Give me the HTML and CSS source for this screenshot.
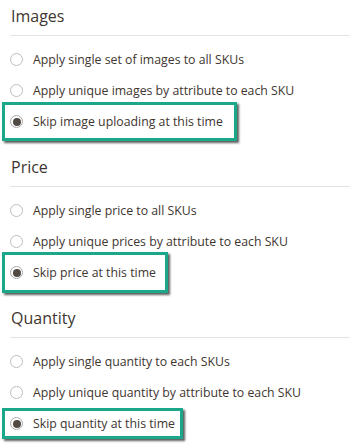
FILE: index.html
```html
<!DOCTYPE html>
<html lang="en">
<head>
<meta charset="utf-8">
<title>Bulk images, price and quantity</title>
<link rel="stylesheet" href="styles.css">
</head>
<body>
<div class="page">
  <section class="section">
    <h2 class="section-title">Images</h2>
    <div class="options">
      <label class="option"><span class="radio"></span><span class="option-text">Apply single set of images to all SKUs</span></label>
      <label class="option"><span class="radio"></span><span class="option-text">Apply unique images by attribute to each SKU</span></label>
      <label class="option"><span class="radio radio-checked"></span><span class="option-text">Skip image uploading at this time</span><span class="highlight highlight-images"></span></label>
    </div>
  </section>
  <section class="section">
    <h2 class="section-title">Price</h2>
    <div class="options">
      <label class="option"><span class="radio"></span><span class="option-text">Apply single price to all SKUs</span></label>
      <label class="option"><span class="radio"></span><span class="option-text">Apply unique prices by attribute to each SKU</span></label>
      <label class="option"><span class="radio radio-checked"></span><span class="option-text">Skip price at this time</span><span class="highlight highlight-price"></span></label>
    </div>
  </section>
  <section class="section">
    <h2 class="section-title">Quantity</h2>
    <div class="options">
      <label class="option"><span class="radio"></span><span class="option-text">Apply single quantity to each SKUs</span></label>
      <label class="option"><span class="radio"></span><span class="option-text">Apply unique quantity by attribute to each SKU</span></label>
      <label class="option"><span class="radio radio-checked"></span><span class="option-text">Skip quantity at this time</span><span class="highlight highlight-qty"></span></label>
    </div>
  </section>
</div>
</body>
</html>
```
FILE: styles.css
```css
html, body {
  margin: 0;
  padding: 0;
  background: #ffffff;
}
body {
  font-family: "Open Sans", "Liberation Sans", sans-serif;
  color: #41362f;
  width: 350px;
  height: 447px;
  overflow: hidden;
}
.page {
  padding: 4px 0 0 0;
}
.section {
  margin-bottom: 18px;
}
.section-title {
  margin: 0 0 0 10px;
  padding: 0 0 7px 1px;
  font-size: 16px;
  font-weight: 400;
  line-height: 24px;
  color: #41362f;
  border-bottom: 1px solid #e3e3e3;
}
.options {
  display: flex;
  flex-direction: column;
  margin-top: 8px;
}
.option {
  position: relative;
  display: flex;
  align-items: center;
  height: 31px;
  padding-left: 10px;
  gap: 10px;
  font-size: 12.3px;
  color: #41362f;
}
.radio {
  flex: none;
  box-sizing: border-box;
  width: 13px;
  height: 13px;
  border-radius: 50%;
  border: 1px solid #bdbdbd;
  background: #ffffff;
  display: flex;
  align-items: center;
  justify-content: center;
}
.radio-checked {
  border-color: #a9a9a9;
}
.radio-checked::after {
  content: "";
  width: 8px;
  height: 8px;
  border-radius: 50%;
  background: #514943;
}
.option-text {
  white-space: nowrap;
}
.highlight {
  position: absolute;
  left: 2px;
  box-sizing: border-box;
  border: 3px solid #1ba88a;
  box-shadow: 2px 2px 2px rgba(40, 40, 40, 0.75);
  pointer-events: none;
}
.highlight-images {
  top: -4px;
  width: 235px;
  height: 39px;
}
.highlight-price {
  top: -5px;
  width: 166px;
  height: 41px;
}
.highlight-qty {
  top: 0;
  width: 181px;
  height: 31px;
}
```
